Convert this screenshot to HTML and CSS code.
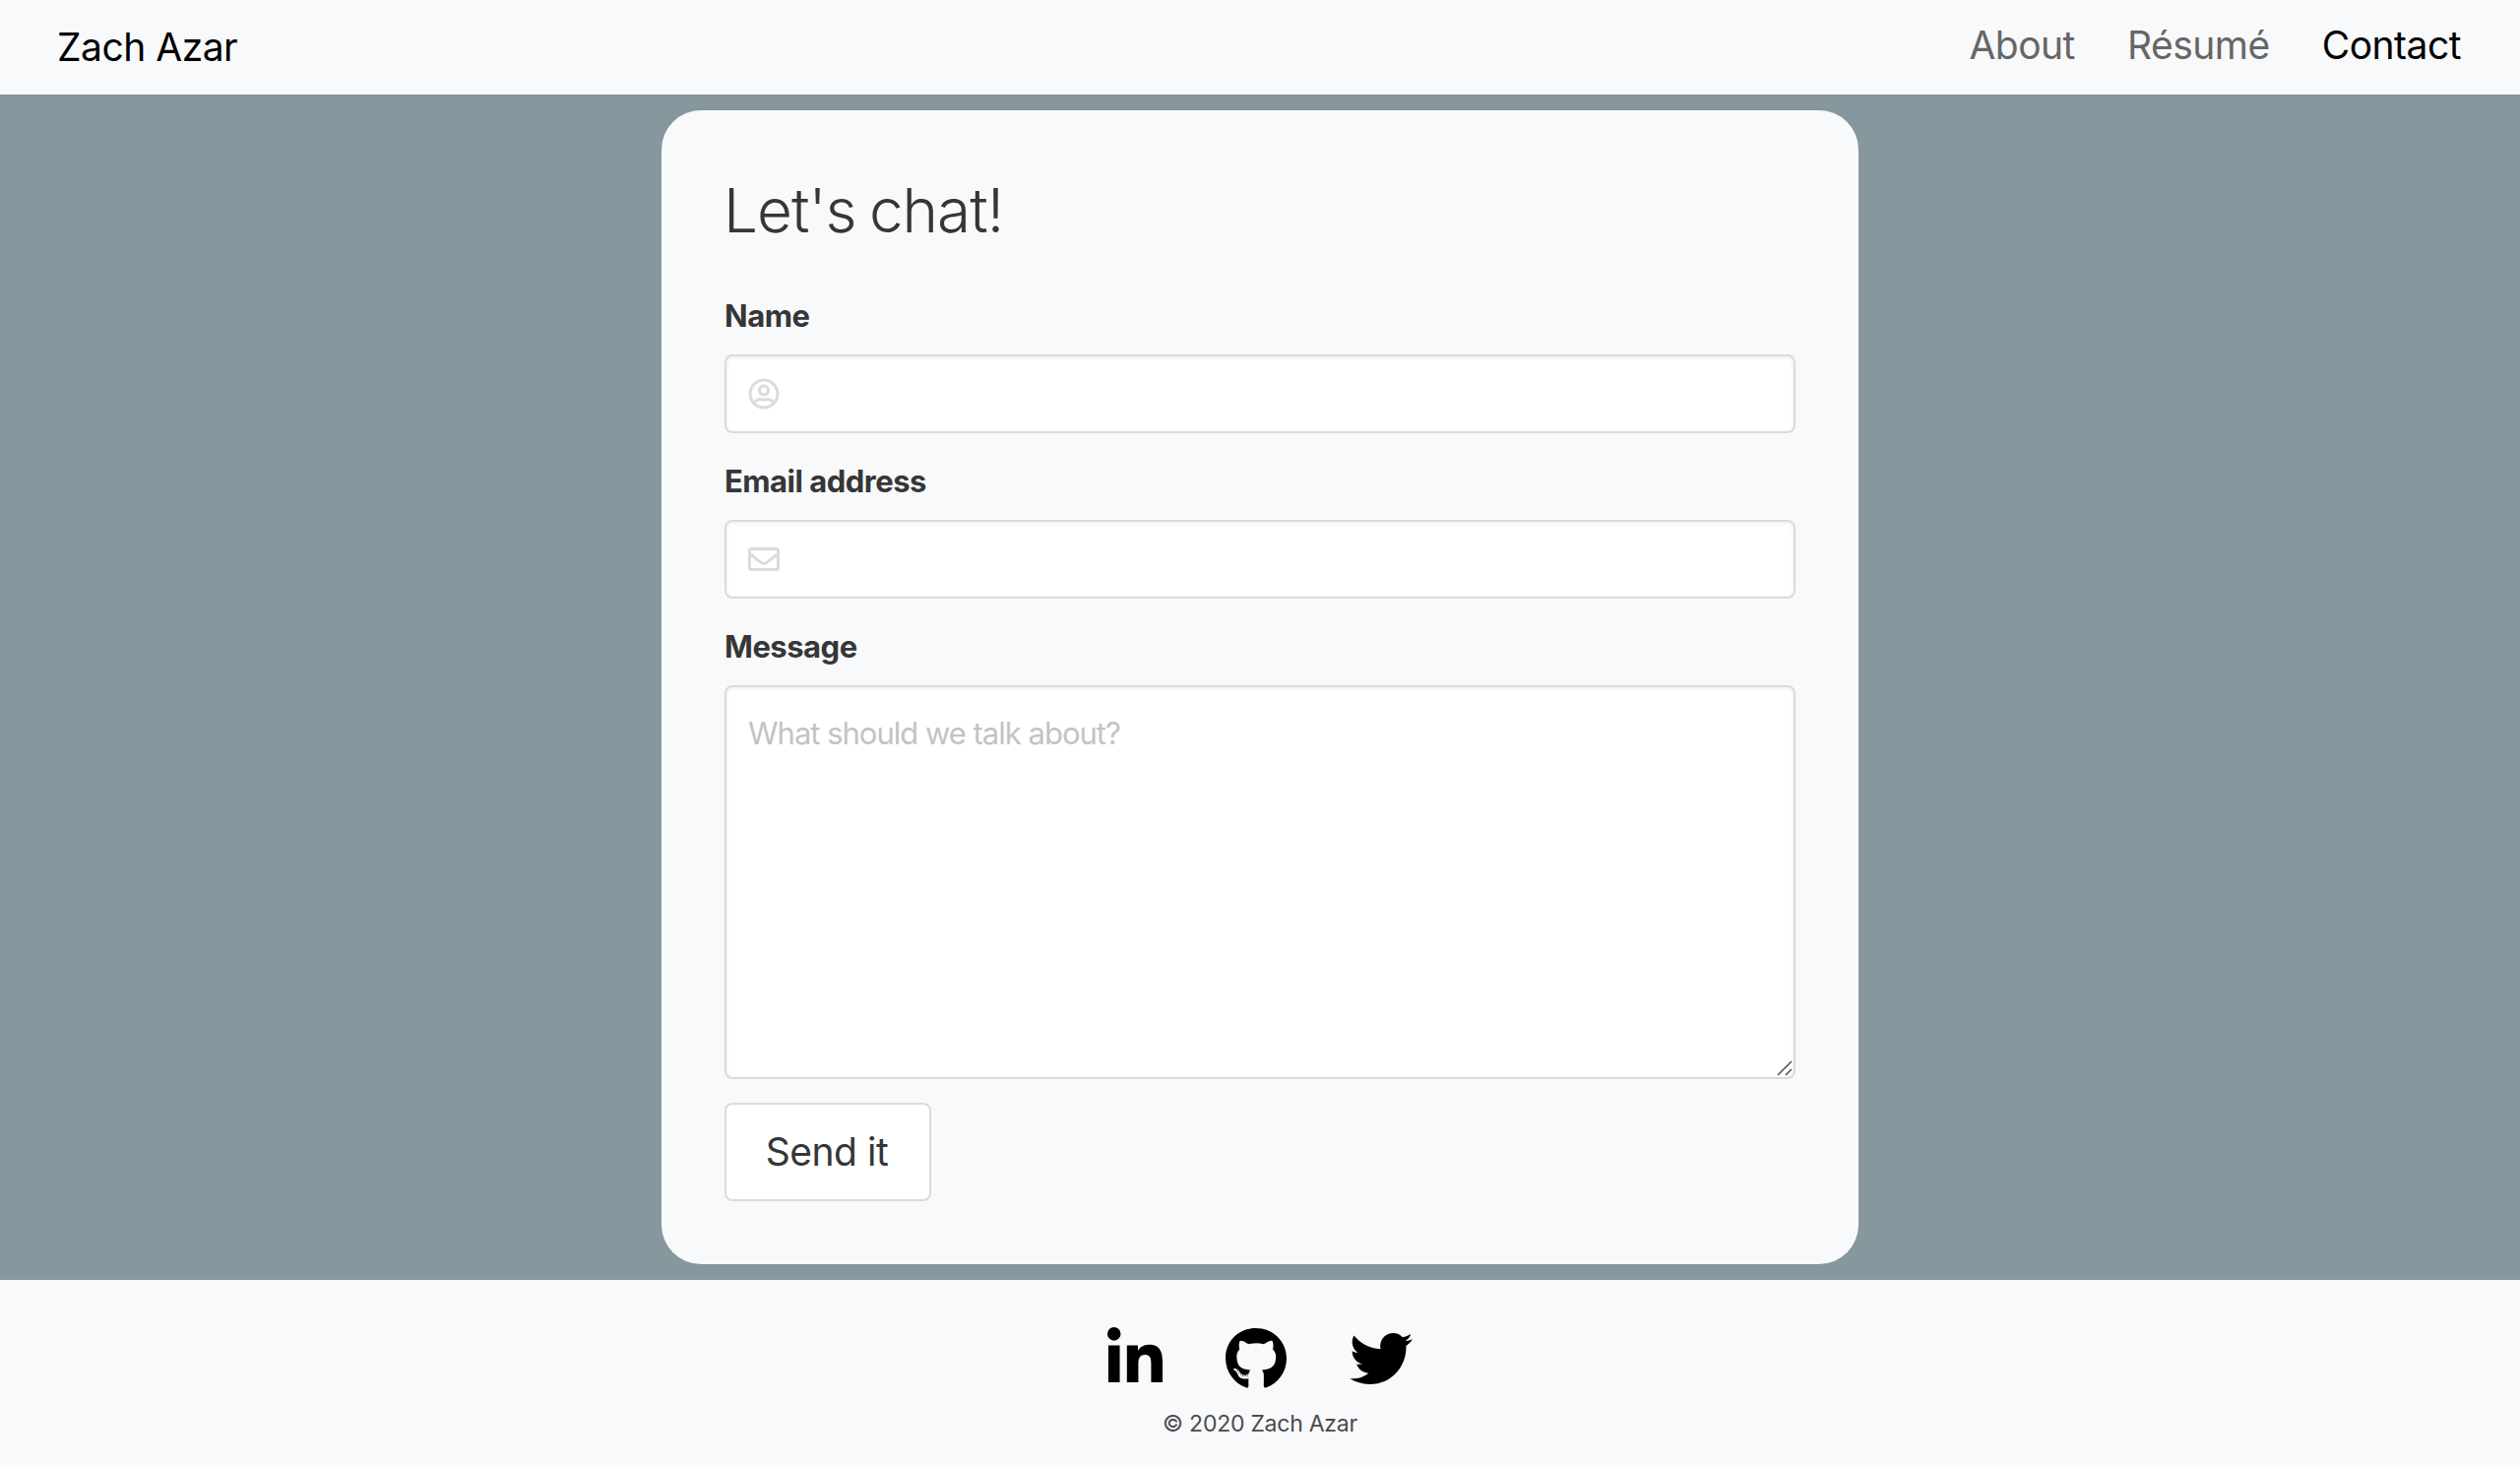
FILE: index.html
```html
<!DOCTYPE html>
<html lang="en">
<head>
<meta charset="utf-8">
<title>Zach Azar</title>
<link rel="stylesheet" href="styles.css">
</head>
<body>
<header class="navbar">
  <a class="brand">Zach Azar</a>
  <nav class="menu">
    <a class="menu-item">About</a>
    <a class="menu-item">Résumé</a>
    <a class="menu-item is-active">Contact</a>
  </nav>
</header>
<main class="main">
  <form class="card">
    <h1 class="title">Let's chat!</h1>
    <div class="field">
      <label class="label" for="name">Name</label>
      <div class="input">
        <svg width="32" height="32" viewBox="-8 0 512 512" fill="currentColor"><path d="M248 104c-53 0-96 43-96 96s43 96 96 96 96-43 96-96-43-96-96-96zm0 144c-26.500 0-48-21.500-48-48s21.500-48 48-48 48 21.500 48 48-21.500 48-48 48zm0-240C111 8 0 119 0 256s111 248 248 248 248-111 248-248S385 8 248 8zm0 448c-49.700 0-95.100-18.300-130.100-48.400 14.900-23 40.400-38.600 69.600-39.500 20.800 6.400 40.600 9.600 60.500 9.600s39.700-3.100 60.500-9.600c29.200 1 54.700 16.500 69.600 39.500-35 30.100-80.400 48.400-130.100 48.400zm162.700-84.100c-24.400-31.400-62.100-51.900-105.100-51.900-10.200 0-26 9.600-57.600 9.600-31.500 0-47.400-9.600-57.600-9.600-42.900 0-80.600 20.500-105.100 51.900C61.900 339.200 48 299.200 48 256c0-110.300 89.700-200 200-200s200 89.700 200 200c0 43.200-13.900 83.200-37.300 115.900z"/></svg>
        <input class="control" id="name" type="text">
      </div>
    </div>
    <div class="field">
      <label class="label" for="email">Email address</label>
      <div class="input">
        <svg width="32" height="32" viewBox="0 0 512 512" fill="currentColor"><path d="M464 64H48C21.490 64 0 85.490 0 112v288c0 26.510 21.490 48 48 48h416c26.510 0 48-21.490 48-48V112c0-26.510-21.490-48-48-48zm0 48v40.805c-22.422 18.259-58.168 46.651-134.587 106.490-16.841 13.247-50.201 45.072-73.413 44.701-23.208.375-56.579-31.459-73.413-44.701C106.180 199.465 70.425 171.067 48 152.805V112h416zM48 400V214.398c22.914 18.251 55.409 43.862 104.938 82.646 21.857 17.205 60.134 55.186 103.062 54.955 42.717.231 80.509-37.199 103.053-54.947 49.528-38.783 82.032-64.401 104.947-82.653V400H48z"/></svg>
        <input class="control" id="email" type="email">
      </div>
    </div>
    <div class="field">
      <label class="label" for="message">Message</label>
      <div class="message">
        <textarea class="textarea" id="message" placeholder="What should we talk about?"></textarea>
        <svg class="grip" width="16" height="16" viewBox="0 0 16 16" fill="none" stroke="#555" stroke-width="1.600"><path d="M1 15 15 1M9 15l6-6"/></svg>
      </div>
    </div>
    <button class="button" type="button">Send it</button>
  </form>
</main>
<footer class="footer">
  <div class="social">
    <svg width="56" height="64" viewBox="0 0 448 512"><path d="M100.280 448H7.400V148.900h92.880zM53.790 108.100C24.090 108.100 0 83.500 0 53.800a53.790 53.790 0 0 1 107.580 0c0 29.700-24.100 54.300-53.790 54.300zM447.900 448h-92.680V302.400c0-34.700-.7-79.200-48.290-79.200-48.290 0-55.690 37.700-55.690 76.700V448h-92.780V148.900h89.080v40.800h1.300c12.400-23.500 42.690-48.300 87.880-48.300 94 0 111.280 61.900 111.280 142.300V448z"/></svg>
    <svg width="62" height="64" viewBox="0 0 496 512"><path d="M165.900 397.400c0 2-2.300 3.600-5.200 3.600-3.300.3-5.600-1.300-5.600-3.600 0-2 2.300-3.600 5.200-3.600 3-.3 5.600 1.300 5.600 3.600zm-31.100-4.500c-.7 2 1.300 4.300 4.300 4.900 2.600 1 5.600 0 6.200-2s-1.300-4.300-4.300-5.200c-2.600-.7-5.500.3-6.200 2.300zm44.200-1.700c-2.900.7-4.900 2.600-4.600 4.900.3 2 2.900 3.300 5.900 2.600 2.900-.7 4.900-2.600 4.600-4.600-.3-1.900-3-3.200-5.900-2.900zM244.800 8C106.100 8 0 113.300 0 252c0 110.900 69.800 205.800 169.500 239.200 12.800 2.300 17.300-5.600 17.300-12.100 0-6.200-.3-40.400-.3-61.400 0 0-70 15-84.700-29.800 0 0-11.400-29.100-27.800-36.600 0 0-22.900-15.700 1.600-15.400 0 0 24.900 2 38.600 25.800 21.900 38.600 58.600 27.500 72.900 20.900 2.300-16 8.800-27.100 16-33.700-55.900-6.200-112.300-14.300-112.300-110.500 0-27.500 7.600-41.300 23.600-58.900-2.600-6.500-11.100-33.300 2.600-67.900 20.900-6.500 69 27 69 27 20-5.600 41.500-8.500 62.800-8.500s42.800 2.900 62.800 8.500c0 0 48.100-33.600 69-27 13.700 34.700 5.200 61.400 2.600 67.900 16 17.700 25.800 31.500 25.800 58.900 0 96.500-58.900 104.200-114.800 110.500 9.200 7.900 17 22.900 17 46.400 0 33.700-.3 75.400-.3 83.600 0 6.500 4.600 14.400 17.300 12.100C428.200 457.800 496 362.900 496 252 496 113.300 383.500 8 244.800 8zM97.200 352.900c-1.300 1-1 3.300.7 5.200 1.600 1.600 3.900 2.300 5.200 1 1.300-1 1-3.300-.7-5.200-1.600-1.600-3.900-2.300-5.200-1zm-10.800-8.100c-.7 1.300.3 2.900 2.300 3.900 1.600 1 3.600.7 4.300-.7.7-1.300-.3-2.900-2.300-3.900-2-.6-3.600-.3-4.300.7zm32.400 35.600c-1.600 1.300-1 4.300 1.300 6.200 2.300 2.300 5.200 2.600 6.500 1 1.300-1.300.7-4.300-1.300-6.200-2.200-2.300-5.200-2.600-6.500-1zm-11.400-14.700c-1.600 1-1.600 3.600 0 5.900 1.600 2.300 4.300 3.300 5.600 2.300 1.600-1.300 1.600-3.900 0-6.200-1.400-2.300-4-3.300-5.600-2z"/></svg>
    <svg width="64" height="64" viewBox="0 0 512 512"><path d="M459.370 151.716c.325 4.548.325 9.097.325 13.645 0 138.720-105.583 298.558-298.558 298.558-59.452 0-114.680-17.219-161.137-47.106 8.447.974 16.568 1.299 25.340 1.299 49.055 0 94.213-16.568 130.274-44.832-46.132-.975-84.792-31.188-98.112-72.772 6.498.974 12.995 1.624 19.818 1.624 9.421 0 18.843-1.300 27.614-3.573-48.081-9.747-84.143-51.980-84.143-102.985v-1.299c13.969 7.797 30.214 12.670 47.431 13.319-28.264-18.843-46.781-51.005-46.781-87.391 0-19.492 5.197-37.360 14.294-52.954 51.655 63.675 129.300 105.258 216.365 109.807-1.624-7.797-2.599-15.918-2.599-24.040 0-57.828 46.782-104.934 104.934-104.934 30.213 0 57.502 12.670 76.670 33.137 23.715-4.548 46.456-13.320 66.599-25.340-7.798 24.366-24.366 44.833-46.132 57.827 21.117-2.273 41.584-8.122 60.426-16.243-14.292 20.791-32.161 39.308-52.628 54.253z"/></svg>
  </div>
  <p class="copyright">© 2020 Zach Azar</p>
</footer>
</body>
</html>
```
FILE: styles.css
```css
* {
  box-sizing: border-box;
}

body {
  margin: 0;
  height: 1488px;
  display: flex;
  flex-direction: column;
  background: #f8f9fb;
  color: #363636;
  font-family: Inter, "Liberation Sans", sans-serif;
  letter-spacing: -0.5px;
}

svg {
  display: block;
  flex: none;
}

.navbar {
  height: 96px;
  padding: 0 60px 0 58px;
  display: flex;
  align-items: center;
  justify-content: space-between;
  color: #000;
  font-size: 39px;
}

.brand {
  padding-bottom: 1px;
}

.menu {
  display: flex;
  gap: 53px;
  padding-bottom: 5px;
}

.menu-item {
  color: #666;
}

.menu-item.is-active {
  color: #000;
}

.main {
  display: flex;
  justify-content: center;
  padding: 16px 0;
  background: #86979e;
}

.card {
  width: 1216px;
  padding: 64px;
  border-radius: 40px;
  background: #f8f9fb;
}

.title {
  margin: 0 0 48px -1px;
  padding-top: 2px;
  height: 72px;
  font-size: 62px;
  font-weight: 300;
  line-height: 72px;
  letter-spacing: -1px;
  word-spacing: -3px;
}

.field {
  margin-bottom: 24px;
}

.label {
  display: block;
  padding-top: 1px;
  margin-bottom: 15px;
  font-size: 31px;
  font-weight: 700;
  line-height: 48px;
}

.input,
.textarea,
.button {
  border: 2px solid #dbdbdb;
  border-radius: 8px;
  background: #fff;
}

.input,
.textarea {
  box-shadow: inset 0 1px 4px rgba(10, 10, 10, 0.08);
}

.input {
  height: 80px;
  padding: 0 22px;
  display: flex;
  align-items: center;
  gap: 22px;
  color: #dbdbdb;
}

.control {
  flex: 1;
  border: 0;
  outline: 0;
  background: transparent;
  color: #363636;
  font: inherit;
  font-size: 31px;
}

.message {
  position: relative;
}

.textarea {
  display: block;
  width: 100%;
  height: 400px;
  padding: 23px 22px;
  resize: none;
  font: 31px/48px Inter, "Liberation Sans", sans-serif;
  letter-spacing: -1px;
}

.textarea::placeholder {
  color: #c3c3c3;
}

.grip {
  position: absolute;
  right: 3px;
  bottom: 3px;
}

.button {
  display: block;
  width: 210px;
  height: 100px;
  padding: 0 2px 1px 0;
  color: #363636;
  font: 39px Inter, "Liberation Sans", sans-serif;
  letter-spacing: -0.5px;
}

.footer {
  flex: 1;
  padding-top: 48px;
  display: flex;
  flex-direction: column;
  align-items: center;
  gap: 16px;
}

.social {
  display: flex;
  gap: 64px;
}

.copyright {
  margin: 0;
  color: #4a4a4a;
  font-size: 23px;
  line-height: 36px;
  letter-spacing: -0.25px;
}
```
